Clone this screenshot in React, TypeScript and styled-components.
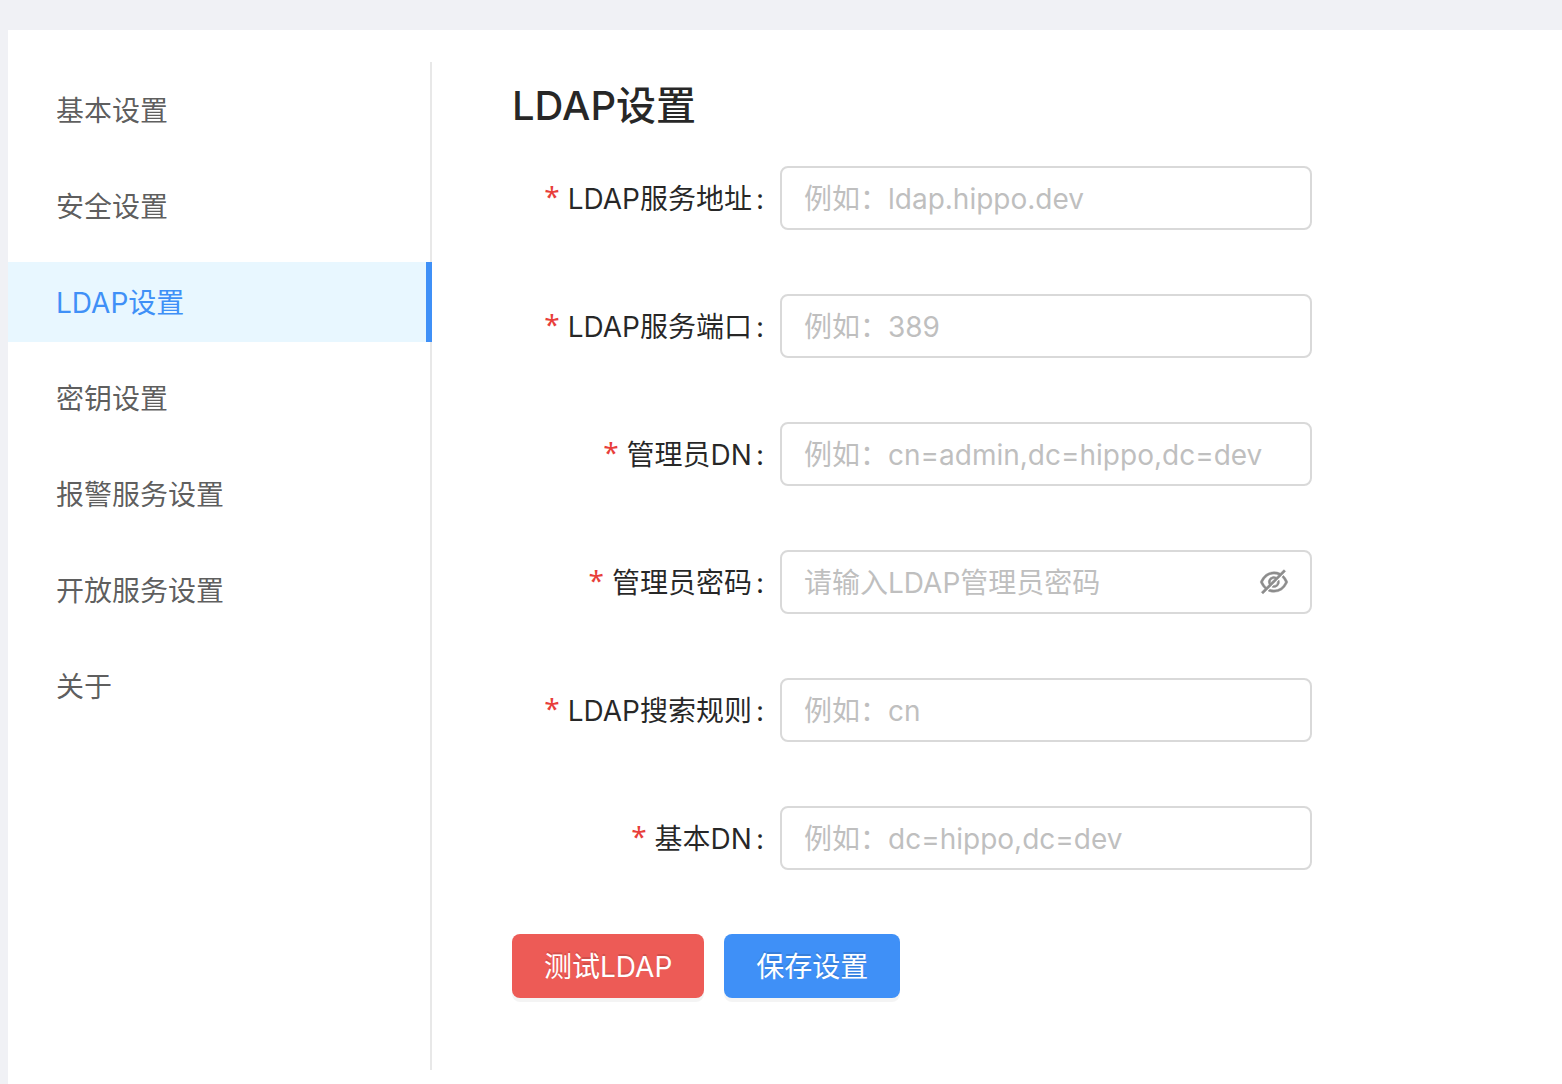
import React, { useState } from 'react';
import styled, { createGlobalStyle, css } from 'styled-components';
import { AiOutlineEyeInvisible, AiOutlineEye } from 'react-icons/ai';

const GlobalStyle = createGlobalStyle`
  *, *::before, *::after { box-sizing: border-box; }
  body {
    margin: 0;
    background: #f0f1f5;
    color: rgba(0, 0, 0, 0.85);
    font-family: Inter, "Noto Sans CJK SC", sans-serif;
    font-size: 28px;
    line-height: 44px;
  }
`;

const Page = styled.div`
  display: flex;
  min-height: 100vh;
  padding: 30px 0 0 8px;
`;

const Panel = styled.main`
  display: flex;
  flex: 1;
  padding: 32px 0 14px;
  background: #fff;
`;

const SideMenu = styled.nav`
  flex: 0 0 424px;
  border-right: 2px solid #e8e8e8;
`;

const MenuList = styled.ul`
  display: flex;
  flex-direction: column;
  gap: 16px;
  margin: 8px -2px 0 0;
  padding: 0;
  list-style: none;
`;

const MenuLink = styled.a<{ $active: boolean }>`
  display: block;
  padding: 2px 48px 0;
  line-height: 78px;
  color: rgba(0, 0, 0, 0.65);
  text-decoration: none;

  ${({ $active }) =>
    $active &&
    css`
      background: #e8f7ff;
      border-right: 6px solid #3f90f7;
      color: #3f90f7;
    `}
`;

const Content = styled.section`
  flex: 1;
  min-width: 0;
  padding: 16px 80px;
`;

const Title = styled.h1`
  margin: 0 0 32px;
  font-size: 40px;
  font-weight: 500;
  line-height: 56px;
`;

const Form = styled.form`
  max-width: 800px;
`;

const Field = styled.div`
  display: grid;
  grid-template-columns: 1fr 532px;
  align-items: center;
  margin-bottom: 64px;
`;

const Label = styled.label`
  display: flex;
  justify-content: flex-end;
  padding: 2px 16px 0 0;
  white-space: nowrap;

  &::before {
    content: '*';
    margin-right: 8px;
    color: #e83e3a;
    font-family: "Noto Sans", sans-serif;
    line-height: 38px;
  }

  &::after {
    content: ':';
    margin-left: 4px;
  }
`;

const InputBox = styled.div`
  display: flex;
  align-items: center;
  height: 64px;
  padding: 0 20px 0 22px;
  border: 2px solid #d9d9d9;
  border-radius: 8px;
  background: #fff;

  &:focus-within { border-color: #3f90f7; }
`;

const Input = styled.input`
  flex: 1;
  min-width: 0;
  height: 46px;
  padding: 2px 0 0;
  border: 0;
  outline: 0;
  background: transparent;
  color: inherit;
  font: inherit;

  &::placeholder { color: #bfbfbf; opacity: 1; }
`;

const EyeButton = styled.button`
  display: flex;
  padding: 0;
  border: 0;
  background: none;
  color: #8c8c8c;
  font-size: 32px;
  cursor: pointer;

  svg { stroke-width: 16; }
`;

const Actions = styled.div`
  display: flex;
  gap: 20px;
`;

const Button = styled.button<{ $color: string }>`
  height: 64px;
  padding: 2px 32px 0;
  border: 0;
  border-radius: 8px;
  background: ${({ $color }) => $color};
  box-shadow: 0 4px 0 rgba(0, 0, 0, 0.045);
  color: #fff;
  font: inherit;
  text-shadow: 0 -2px 0 rgba(0, 0, 0, 0.12);
  cursor: pointer;
`;

const menus = ['基本设置', '安全设置', 'LDAP设置', '密钥设置', '报警服务设置', '开放服务设置', '关于'];

const fields = [
  { id: 'server', label: 'LDAP服务地址', placeholder: '例如：ldap.hippo.dev' },
  { id: 'port', label: 'LDAP服务端口', placeholder: '例如：389' },
  { id: 'admin_dn', label: '管理员DN', placeholder: '例如：cn=admin,dc=hippo,dc=dev' },
  { id: 'password', label: '管理员密码', placeholder: '请输入LDAP管理员密码', secret: true },
  { id: 'rules', label: 'LDAP搜索规则', placeholder: '例如：cn' },
  { id: 'base_dn', label: '基本DN', placeholder: '例如：dc=hippo,dc=dev' },
];

export default function App() {
  const [active, setActive] = useState('LDAP设置');
  const [visible, setVisible] = useState(false);

  return (
    <>
      <GlobalStyle />
      <Page>
        <Panel>
          <SideMenu>
            <MenuList>
              {menus.map((name) => (
                <li key={name}>
                  <MenuLink
                    href="#"
                    $active={name === active}
                    aria-current={name === active ? 'page' : undefined}
                    onClick={(e) => {
                      e.preventDefault();
                      setActive(name);
                    }}
                  >
                    {name}
                  </MenuLink>
                </li>
              ))}
            </MenuList>
          </SideMenu>
          <Content>
            <Title>LDAP设置</Title>
            <Form onSubmit={(e) => e.preventDefault()}>
              {fields.map(({ id, label, placeholder, secret }) => (
                <Field key={id}>
                  <Label htmlFor={id}>{label}</Label>
                  <InputBox>
                    <Input
                      id={id}
                      type={secret && !visible ? 'password' : 'text'}
                      placeholder={placeholder}
                    />
                    {secret && (
                      <EyeButton
                        type="button"
                        aria-label="显示密码"
                        aria-pressed={visible}
                        onClick={() => setVisible(!visible)}
                      >
                        {visible ? <AiOutlineEye /> : <AiOutlineEyeInvisible />}
                      </EyeButton>
                    )}
                  </InputBox>
                </Field>
              ))}
              <Actions>
                <Button type="button" $color="#ed5b56">测试LDAP</Button>
                <Button type="submit" $color="#3f90f7">保存设置</Button>
              </Actions>
            </Form>
          </Content>
        </Panel>
      </Page>
    </>
  );
}
